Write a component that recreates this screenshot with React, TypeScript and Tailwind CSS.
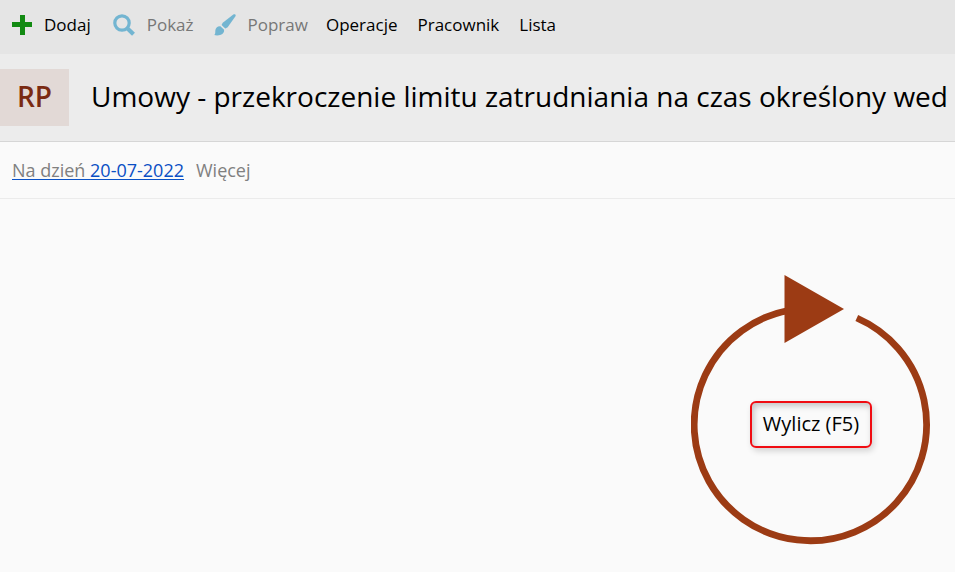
import { clsx } from "clsx";
import type { ReactNode } from "react";

interface ToolbarAction {
	label: string;
	icon: ReactNode;
	disabled?: boolean;
	className?: string;
}

function PlusIcon() {
	return (
		<svg width="20" height="20" viewBox="0 0 20 20" aria-hidden="true">
			<path d="M8 0h5v7h7v5h-7v8H8v-8H0V7h8z" fill="#128a12" />
		</svg>
	);
}

function MagnifierIcon() {
	return (
		<svg width="22" height="22" viewBox="0 0 22 22" aria-hidden="true">
			<circle
				cx="9"
				cy="9"
				r="7.2"
				fill="none"
				stroke="#73b5d1"
				strokeWidth="3.2"
			/>
			<path d="M14 14l6.500 6.300" stroke="#73b5d1" strokeWidth="4.200" />
		</svg>
	);
}

function BrushIcon() {
	return (
		<svg width="22" height="22" viewBox="0 0 22 22" aria-hidden="true">
			<path
				d="M21.3.5c.6.5.4 1.3 0 2L14 12.7c-.8 1-1.7 1.4-2.8 1.8L7.600 10.900c.4-1.100.9-2 1.800-2.700L19.300.6c.7-.5 1.400-.6 2-.1z"
				fill="#73b5d1"
			/>
			<path
				d="M6.400 12.200l3.700 3.500c.3 2.300-1 4.300-3.200 5.100-2.200.8-4.600.9-6.700.3 1.300-.8 1-2.300 1.100-4.300.1-2.800 2.300-4.900 5.100-4.600z"
				fill="#73b5d1"
			/>
		</svg>
	);
}

const actions: ToolbarAction[] = [
	{ label: "Dodaj", icon: <PlusIcon /> },
	{
		label: "Pokaż",
		icon: <MagnifierIcon />,
		disabled: true,
		className: "ml-[22px]",
	},
	{
		label: "Popraw",
		icon: <BrushIcon />,
		disabled: true,
		className: "ml-5",
	},
];

const menus = ["Operacje", "Pracownik", "Lista"];

function Toolbar() {
	return (
		<nav className="flex h-[54px] items-center bg-[#e5e5e5] px-3 pb-1 text-[17px] leading-6">
			{actions.map(({ label, icon, disabled, className }) => (
				<button
					key={label}
					type="button"
					disabled={disabled}
					className={clsx(
						"flex shrink-0 items-center gap-3",
						disabled ? "text-[#777777]" : "text-black",
						className,
					)}
				>
					{icon}
					{label}
				</button>
			))}
			<div className="ml-[18px] flex gap-5">
				{menus.map((label) => (
					<button key={label} type="button">
						{label}
					</button>
				))}
			</div>
		</nav>
	);
}

function PageHeader() {
	return (
		<header className="flex items-center gap-[22px] overflow-hidden border-[#d6d6d6] border-b bg-[#ececec] py-[15px]">
			<div className="flex h-[57px] w-[69px] shrink-0 items-center justify-center bg-[#e2d9d6] pb-1 font-semibold text-[#7a2a12] text-[28px] leading-8">
				RP
			</div>
			<h1 className="whitespace-nowrap pb-1 text-[28px] leading-8">
				Umowy - przekroczenie limitu zatrudniania na czas określony wed
			</h1>
		</header>
	);
}

function FilterBar() {
	return (
		<div className="flex h-[57px] items-center gap-3 border-[#ebebeb] border-b px-3 text-[#808080] text-[18px] leading-6">
			<a
				href="#date"
				className="underline decoration-1 decoration-[#0a52c6] underline-offset-2"
			>
				Na dzień <span className="text-[#0a4fc4]">20-07-2022</span>
			</a>
			<button type="button">Więcej</button>
		</div>
	);
}

function CalculatePanel() {
	return (
		<div className="grid self-start">
			<svg
				width="240"
				height="270"
				viewBox="0 0 240 270"
				className="col-start-1 row-start-1"
				aria-hidden="true"
			>
				<path
					d="M165.800 43A116.200 116.200 0 1 1 98 35.300"
					fill="none"
					stroke="#9c3b14"
					strokeWidth="6.800"
				/>
				<path d="M93.500 0L153 34 93.500 68z" fill="#9c3b14" />
			</svg>
			<button
				type="button"
				className="col-start-1 row-start-1 mt-7 h-[47px] w-[122px] place-self-center whitespace-nowrap rounded-md border-2 border-[#f00c12] text-[20px] leading-6 shadow-[2px_3px_6px_rgba(0,0,0,0.16),inset_2px_3px_6px_rgba(0,0,0,0.22)]"
			>
				Wylicz (F5)
			</button>
		</div>
	);
}

export default function App() {
	return (
		<div className="flex min-h-screen flex-col bg-[#fafafa] font-['Segoe_UI','Open_Sans',sans-serif] text-black">
			<Toolbar />
			<PageHeader />
			<FilterBar />
			<main className="flex flex-1 justify-end px-6 pt-[76px]">
				<CalculatePanel />
			</main>
		</div>
	);
}
